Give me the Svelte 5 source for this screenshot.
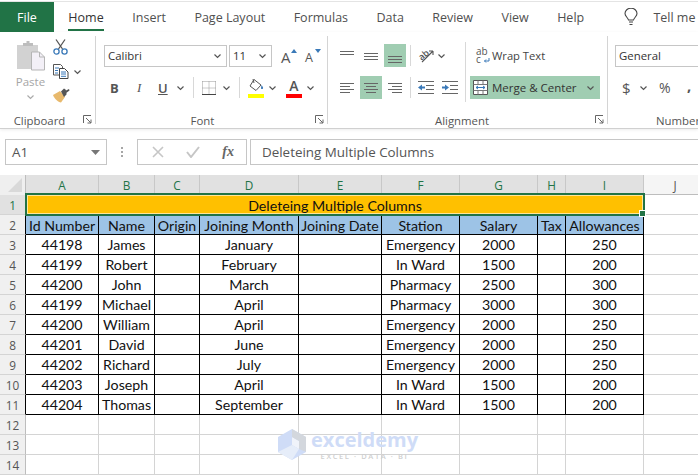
<script lang="ts">
	const tabs = ['Home', 'Insert', 'Page Layout', 'Formulas', 'Data', 'Review', 'View', 'Help'];
	const cols = ['A', 'B', 'C', 'D', 'E', 'F', 'G', 'H', 'I'];
	const heads = ['Id Number', 'Name', 'Origin', 'Joining Month', 'Joining Date', 'Station', 'Salary', 'Tax', 'Allowances'];
	const rows = [
		['44198', 'James', '', 'January', '', 'Emergency', '2000', '', '250'],
		['44199', 'Robert', '', 'February', '', 'In Ward', '1500', '', '200'],
		['44200', 'John', '', 'March', '', 'Pharmacy', '2500', '', '300'],
		['44199', 'Michael', '', 'April', '', 'Pharmacy', '3000', '', '300'],
		['44200', 'William', '', 'April', '', 'Emergency', '2000', '', '250'],
		['44201', 'David', '', 'June', '', 'Emergency', '2000', '', '250'],
		['44202', 'Richard', '', 'July', '', 'Emergency', '2000', '', '250'],
		['44203', 'Joseph', '', 'April', '', 'In Ward', '1500', '', '200'],
		['44204', 'Thomas', '', 'September', '', 'In Ward', '1500', '', '200']
	];
</script>

{#snippet chev(w = 9)}
	<svg class="chev" width={w} height="6" viewBox="0 0 9 6"><path d="M1.5 1.5 4.5 4.5 7.5 1.5" fill="none" stroke="#555" stroke-width="1.2" /></svg>
{/snippet}

{#snippet launcher()}
	<svg class="launcher" width="9" height="9" viewBox="0 0 9 9"><path d="M.5 8V.5H8M3 3l5 5M8 4.5V8H4.5" fill="none" stroke="#666" /></svg>
{/snippet}

{#snippet lines(ys, w = 14)}
	<svg width={w} height="16" viewBox="0 0 {w} 16">
		{#each ys as l}
			<path d="M{l[0]} {l[2]}.5H{l[1]}" stroke="#666" />
		{/each}
	</svg>
{/snippet}

<div class="page">
	<div class="tabs">
		<div class="file">File</div>
		{#each tabs as t, i}
			<div class="tab" class:active={i === 0}>{t}</div>
		{/each}
		<svg class="bulb" width="14" height="18" viewBox="0 0 14 18"><path d="M4.5 12C4 9.500 1 8.500 1 5.500a6 5.300 0 0 1 12 0C13 8.500 10 9.500 9.500 12zM5 14h4M5.500 16.500h3" fill="none" stroke="#444" stroke-width="1.100" /></svg>
		<div class="tab tell">Tell me</div>
	</div>

	<div class="ribbon">
		<section class="group clip">
			<div class="body clip-body">
				<div class="paste">
					<svg width="29" height="31" viewBox="0 0 29 31">
						<path d="M1 5h21v24H1z" fill="#d2d2d2" />
						<path d="M7 6V3h3.500V1h3v2H17v3z" fill="#bdbdbd" />
						<path d="M15.500 12h8l5 5v13h-13z" fill="#f3f0f7" stroke="#b5b5b5" />
						<path d="M23.500 12v5h5" fill="none" stroke="#b5b5b5" />
					</svg>
					<span>Paste</span>
					<svg width="9" height="6" viewBox="0 0 9 6"><path d="M1.500 1.500 4.500 4.500 7.500 1.500" fill="none" stroke="#aaa" stroke-width="1.200" /></svg>
				</div>
				<div class="clip-tools">
					<svg width="15" height="16" viewBox="0 0 15 16">
						<path d="M3 .5 9.500 10M12 .5 5.500 10" fill="none" stroke="#555" stroke-width="1.300" />
						<circle cx="3.500" cy="12.500" r="2.600" fill="none" stroke="#3a79b8" stroke-width="1.300" />
						<circle cx="11.500" cy="12.500" r="2.600" fill="none" stroke="#3a79b8" stroke-width="1.300" />
					</svg>
					<div class="copy">
						<svg width="16" height="15" viewBox="0 0 16 15">
							<path d="M.5.500h7l2 2V11H.5z" fill="#fff" stroke="#555" />
							<path d="M6.500 4.500h5l3.500 3.500v6.500H6.500z" fill="#fff" stroke="#444" />
							<path d="M2 4h4M2 6.500h3M2 9h3M8 8h5M8 10h5M8 12.300h5" stroke="#3a79b8" />
						</svg>
						{@render chev()}
					</div>
					<svg width="17" height="15" viewBox="0 0 17 15">
						<path d="M0 7 7 3l5 6-4 5.500C5 14 1.500 11 0 7z" fill="#e8b96c" />
						<path d="M8 3.500 11 .5l1.500 1 .5 1 3-1.500.5 1.500-3 2.200v1.800l-2.500 2.500z" fill="#555" />
					</svg>
				</div>
			</div>
			<div class="label lab-clip">Clipboard{@render launcher()}</div>
		</section>

		<section class="group font">
			<div class="body">
				<div class="row r1">
					<div class="box fname"><span>Calibri</span>{@render chev()}</div>
					<div class="box fsize"><span>11</span>{@render chev()}</div>
					<div class="grow-a">
						<span class="big-a">A</span><svg class="caret" width="6" height="4" viewBox="0 0 6 4"><path d="M0 4 3 0l3 4z" fill="#3a79b8" /></svg>
					</div>
					<div class="shrink-a">
						<span class="small-a">A</span><svg class="caret" width="6" height="4" viewBox="0 0 6 4"><path d="M0 0 3 4l3-4z" fill="#3a79b8" /></svg>
					</div>
				</div>
				<div class="row r2 font-r2">
					<span class="b">B</span>
					<span class="i">I</span>
					<span class="u">U</span>
					{@render chev()}
					<i class="sep"></i>
					<svg class="borders" width="14" height="14" viewBox="0 0 14 14"><path d="M.5.500h13M.5.500v13M13.500.500v13M7 .5v13M.5 7h13" fill="none" stroke="#999" stroke-dasharray="1 1" /><path d="M0 13.500h14" stroke="#444" /></svg>
					{@render chev()}
					<i class="sep"></i>
					<div class="fill">
						<svg width="16" height="15" viewBox="0 0 16 15">
							<path d="M6 1.500 13 7 8 12.500 2 8z" fill="#fff" stroke="#555" />
							<path d="M5 1 6 5" stroke="#555" />
							<path d="M13.500 7c1 1.500 2 2.500 1.500 3.500-.6 1-2.200.6-2-.6z" fill="#3a79b8" />
						</svg>
						<i class="swatch yellow"></i>
					</div>
					{@render chev()}
					<div class="fontcolor"><span>A</span><i class="swatch red"></i></div>
					{@render chev()}
				</div>
			</div>
			<div class="label lab-font">Font{@render launcher()}</div>
		</section>

		<section class="group align">
			<div class="body align-body">
				<div class="align-left">
					<div class="row r1 al-r1">
						<span class="ic">{@render lines([[0, 14, 3], [0, 14, 6]])}</span>
						<span class="ic">{@render lines([[0, 14, 5], [0, 14, 8], [0, 14, 11]])}</span>
						<span class="ic on">{@render lines([[0, 14, 8], [0, 14, 11], [0, 14, 14]])}</span>
						<i class="sep"></i>
						<svg class="orient" width="17" height="17" viewBox="0 0 17 17">
							<text x="1" y="11" transform="rotate(-40 6 9)" class="ab">ab</text>
							<path d="M4 15 15 4M15 4h-4M15 4v4" fill="none" stroke="#555" stroke-width="1.100" />
						</svg>
						{@render chev()}
					</div>
					<div class="row r2 al-r2">
						<span class="ic">{@render lines([[0, 14, 3], [0, 10, 6], [0, 14, 9], [0, 10, 12]])}</span>
						<span class="ic on">{@render lines([[0, 14, 3], [2, 12, 6], [0, 14, 9], [2, 12, 12]])}</span>
						<span class="ic">{@render lines([[0, 14, 3], [4, 14, 6], [0, 14, 9], [4, 14, 12]])}</span>
						<i class="sep"></i>
						<svg width="16" height="14" viewBox="0 0 16 14"><path d="M0 .5h16M8 4.500h8M8 8.500h8M0 12.500h16" stroke="#666" /><path d="M0 6.500 4 3.500v2h3v2H4v2z" fill="#3a79b8" /></svg>
						<svg width="16" height="14" viewBox="0 0 16 14"><path d="M0 .5h16M8 4.500h8M8 8.500h8M0 12.500h16" stroke="#666" /><path d="M7 6.500 3 3.500v2H0v2h3v2z" fill="#3a79b8" /></svg>
					</div>
				</div>
				<i class="vsep"></i>
				<div class="wrapmerge">
					<div class="wrap">
						<svg class="abc" width="17" height="17" viewBox="0 0 17 17">
							<text x="1" y="8">ab</text>
							<text x="1" y="16">c</text>
							<path d="M14 11v3H9.500M11 12.500 9.500 14l1.500 1.500" fill="none" stroke="#3a79b8" />
						</svg>
						<span>Wrap Text</span>
					</div>
					<div class="merge">
						<svg width="15" height="15" viewBox="0 0 15 15">
							<path d="M.5.500h14v14H.5z" fill="#fff" stroke="#555" />
							<path d="M.5 4.500h14M.5 10.500h14M5 .5v4M10 .5v4M5 10.500v4M10 10.500v4" stroke="#777" fill="none" />
							<path d="M3 7.500h9M3 7.500l2-1.500M3 7.500 5 9M12 7.500 10 6M12 7.500 10 9" stroke="#3a79b8" fill="none" />
						</svg>
						<span>Merge &amp; Center</span>
						{@render chev()}
					</div>
				</div>
			</div>
			<div class="label lab-align">Alignment{@render launcher()}</div>
		</section>

		<section class="group number">
			<div class="body">
				<div class="row r1"><div class="box general"><span>General</span></div></div>
				<div class="row r2 num-r2">
					<span class="sym dollar">$</span>
					{@render chev()}
					<span class="sym pct">%</span>
					<span class="sym comma">,</span>
				</div>
			</div>
			<div class="label">Number</div>
		</section>
	</div>

	<div class="formula">
		<div class="namebox"><span>A1</span><svg width="9" height="5" viewBox="0 0 9 5"><path d="M0 0h9L4.500 5z" fill="#777" /></svg></div>
		<div class="dots"><i></i><i></i><i></i></div>
		<div class="fbtns">
			<svg width="12" height="12" viewBox="0 0 12 12"><path d="M1 1l10 10M11 1 1 11" stroke="#c6c6c6" stroke-width="1.600" /></svg>
			<svg width="14" height="12" viewBox="0 0 14 12"><path d="M1 6l4 5 8-10" fill="none" stroke="#c6c6c6" stroke-width="2" /></svg>
			<span class="fx">fx</span>
		</div>
		<div class="fvalue">Deleteing Multiple Columns</div>
	</div>

	<div class="sheet">
		<div class="corner"><svg width="14" height="14" viewBox="0 0 14 14"><path d="M14 0v14H0z" fill="#d9d9d9" /></svg></div>
		{#each cols as c}
			<div class="ch sel">{c}</div>
		{/each}
		<div class="ch">J</div>

		<div class="rh sel">1</div>
		<div class="title">Deleteing Multiple Columns</div>
		<div class="blank"></div>

		<div class="rh edge">2</div>
		{#each heads as h}
			<div class="tc head">{h}</div>
		{/each}
		<div class="blank"></div>

		{#each rows as r, i}
			<div class="rh edge">{i + 3}</div>
			{#each r as v}
				<div class="tc">{v}</div>
			{/each}
			<div class="blank"></div>
		{/each}

		{#each [12, 13, 14] as n}
			<div class="rh">{n}</div>
			{#each cols as c}
				<div class="blank"></div>
			{/each}
			<div class="blank"></div>
		{/each}

		<div class="selection"><i></i></div>
		<div class="mark">
			<svg width="28" height="31" viewBox="0 0 28 31">
				<path d="M14 0 28 8v15L14 31 0 23V8z" fill="#cfdcf7" />
				<path d="M14 8 21 12v8l-7-4z" fill="#f0f3fa" />
				<path d="M14 0 28 8v15l-7-3v-8L14 8z" fill="#d3d7dd" />
				<path d="M0 23 14 16l7 4-7 11z" fill="#e6edf9" />
			</svg>
			<div class="mark-text">
				<span class="mark-name">exceldemy</span>
				<span class="mark-sub">EXCEL · DATA · BI</span>
			</div>
		</div>
	</div>
</div>

<style>
	:global(body) {
		margin: 0;
		background: #fff;
	}
	.page {
		width: 698px;
		height: 476px;
		overflow: hidden;
		font-family: 'Open Sans', sans-serif;
		color: #444;
		position: relative;
		box-shadow: inset 0 1px 0 #fff, inset 0 2px 0 #e4e4e4;
	}
	.tabs {
		display: flex;
		height: 30px;
		padding-top: 2px;
		align-items: stretch;
	}
	.file {
		width: 54px;
		flex: none;
		background: #217346;
		color: #fff;
		font-size: 12.5px;
		display: flex;
		align-items: center;
		justify-content: center;
	}
	.tab {
		flex: none;
		font-size: 12.5px;
		color: #505050;
		display: flex;
		align-items: center;
		margin-left: 14.200px;
		margin-right: 14.200px;
		white-space: nowrap;
		position: relative;
	}
	.tab.active {
		color: #333;
		font-weight: 500;
		letter-spacing: 0.1px;
	}
	.tab.active::after {
		content: '';
		position: absolute;
		left: 0;
		right: 0;
		bottom: 1px;
		height: 2px;
		background: #217346;
	}
	.bulb {
		flex: none;
		align-self: center;
		margin-left: 26px;
	}
	.tell {
		margin-left: 15px;
		margin-right: 0;
	}
	.ribbon {
		display: flex;
		height: 96px;
		border-bottom: 1px solid #d0d0d0;
		box-shadow: 0 1px 3px rgba(0, 0, 0, 0.08);
		overflow: hidden;
	}
	.group {
		display: flex;
		flex-direction: column;
		flex: none;
		position: relative;
		padding-top: 4px;
		box-sizing: border-box;
	}
	.group + .group::before {
		content: '';
		position: absolute;
		left: 0;
		top: 4px;
		bottom: 4px;
		width: 1px;
		background: #d4d4d4;
	}
	.body {
		flex: 1;
	}
	.label {
		height: 22px;
		padding-top: 6px;
		box-sizing: border-box;
		font-size: 11.4px;
		color: #555;
		display: flex;
		align-items: center;
		justify-content: center;
		position: relative;
	}
	.lab-clip {
		padding-right: 16px;
	}
	.lab-font {
		padding-right: 26px;
	}
	.lab-align {
		padding-right: 10px;
	}
	.launcher {
		position: absolute;
		right: 3px;
		bottom: 4px;
	}
	.clip {
		width: 95px;
	}
	.clip-body {
		display: flex;
		padding-left: 15px;
		gap: 7px;
	}
	.paste {
		width: 31px;
		display: flex;
		flex-direction: column;
		align-items: center;
		padding-top: 4px;
		font-size: 11.5px;
		color: #a6a6a6;
	}
	.paste span {
		margin-top: 2px;
		line-height: 18px;
	}
	.paste svg:last-child {
		margin-top: 3px;
	}
	.clip-tools {
		display: flex;
		flex-direction: column;
		gap: 9px;
		padding-top: 3px;
		align-items: flex-start;
	}
	.copy {
		display: flex;
		align-items: center;
		gap: 4px;
	}
	.font {
		width: 232px;
		padding-left: 9px;
	}
	.row {
		display: flex;
		align-items: center;
	}
	.r1 {
		height: 23px;
		margin-top: 8px;
	}
	.r2 {
		height: 23px;
		margin-top: 9px;
	}
	.box {
		height: 22px;
		box-sizing: border-box;
		border: 1px solid #c6c6c6;
		display: flex;
		align-items: center;
		justify-content: space-between;
		padding: 0 4px 0 3px;
		font-size: 11.4px;
		color: #333;
	}
	.fname {
		width: 123px;
	}
	.fsize {
		width: 43px;
		margin-left: 2px;
	}
	.grow-a,
	.shrink-a {
		display: flex;
		align-items: flex-start;
		margin-left: 9px;
		width: 15px;
		color: #555;
		height: 20px;
		position: relative;
	}
	.big-a {
		font-size: 15px;
		line-height: 20px;
		margin-top: 1px;
	}
	.small-a {
		font-size: 12.5px;
		line-height: 20px;
		margin-top: 2px;
	}
	.caret {
		position: absolute;
		left: 10px;
		top: 3px;
	}
	.font-r2 {
		padding-left: 6px;
	}
	.font-r2 span {
		font-size: 13px;
		color: #555;
	}
	.b {
		font-weight: 700;
		width: 24px;
	}
	.i {
		font-style: italic;
		font-family: 'Liberation Serif', serif;
		width: 24px;
		padding-left: 3px;
		box-sizing: border-box;
	}
	.u {
		text-decoration: underline;
		font-weight: 600;
		width: 14px;
	}
	.font-r2 .chev {
		margin-left: 4px;
	}
	.font-r2 .borders + .chev {
		margin-left: 6px;
	}
	.sep {
		width: 1px;
		height: 21px;
		background: #d8d8d8;
		margin: 0 8px;
		flex: none;
	}
	.fill {
		width: 16px;
		height: 21px;
		display: flex;
		flex-direction: column;
		justify-content: flex-end;
	}
	.fill svg {
		margin-bottom: 1px;
	}
	.swatch {
		display: block;
		height: 4px;
		width: 16px;
	}
	.yellow {
		background: #ffff00;
	}
	.red {
		background: #ff0000;
	}
	.fontcolor {
		width: 16px;
		margin-left: 9px;
		height: 21px;
		display: flex;
		flex-direction: column;
		align-items: center;
		justify-content: flex-end;
	}
	.font-r2 .fontcolor span {
		font-size: 14px;
		line-height: 16px;
		font-weight: 600;
	}
	.align {
		width: 280px;
	}
	.align-body {
		display: flex;
		padding-left: 9px;
	}
	.align-left {
		width: 129px;
	}
	.ic {
		width: 22px;
		height: 23px;
		display: flex;
		align-items: center;
		justify-content: center;
		flex: none;
	}
	.ic.on {
		background: #a0cdb2;
	}
	.al-r1,
	.al-r2 {
		gap: 2px;
	}
	.al-r1 .sep,
	.al-r2 .sep {
		margin: 0 5px 0 2px;
	}
	.al-r2 svg + svg {
		margin-left: 6px;
	}
	.orient {
		overflow: visible;
	}
	.orient text.ab {
		font-size: 9px;
		fill: #555;
		font-weight: 600;
	}
	.vsep {
		width: 1px;
		height: 60px;
		margin-top: 6px;
		background: #d8d8d8;
		flex: none;
	}
	.wrapmerge {
		margin-left: 4px;
		font-size: 11.5px;
		color: #444;
	}
	.wrap {
		height: 23px;
		margin-top: 8px;
		margin-bottom: 9px;
		display: flex;
		align-items: center;
		padding-left: 5px;
		font-size: 11.2px;
	}
	.abc {
		flex: none;
	}
	.abc text {
		font-size: 10px;
		fill: #555;
	}
	.merge {
		width: 130px;
		height: 23px;
		background: #a0cdb2;
		display: flex;
		align-items: center;
		padding-left: 3px;
		box-sizing: border-box;
		color: #333;
	}
	.merge span {
		margin-left: 4px;
		flex: 1;
		white-space: nowrap;
	}
	.merge .chev {
		margin-right: 5px;
	}
	.number {
		flex: 1;
		padding-left: 8px;
		width: 200px;
	}
	.general {
		width: 200px;
	}
	.num-r2 {
		padding-left: 7px;
	}
	.sym {
		font-size: 15px;
		color: #555;
	}
	.dollar {
		width: 17px;
	}
	.pct {
		margin-left: 11px;
		width: 23px;
		font-size: 14px;
	}
	.comma {
		font-weight: 700;
		margin-left: 5px;
		margin-top: -6px;
	}
	.number .label {
		justify-content: flex-start;
		padding-left: 41px;
		white-space: nowrap;
	}
	.formula {
		display: flex;
		align-items: stretch;
		height: 26px;
		margin-top: 10px;
		padding-left: 5px;
		font-size: 13.4px;
		color: #555;
	}
	.namebox {
		width: 102px;
		box-sizing: border-box;
		border: 1px solid #c6c6c6;
		display: flex;
		align-items: center;
		justify-content: space-between;
		padding: 0 6px;
	}
	.dots {
		width: 30px;
		display: flex;
		flex-direction: column;
		align-items: center;
		justify-content: center;
		gap: 2px;
	}
	.dots i {
		width: 2px;
		height: 2px;
		background: #a6a6a6;
	}
	.fbtns {
		width: 110px;
		box-sizing: border-box;
		border: 1px solid #c6c6c6;
		display: flex;
		align-items: center;
		justify-content: space-between;
		padding: 0 12px 0 14px;
	}
	.fx {
		font-family: 'Liberation Serif', serif;
		font-style: italic;
		font-weight: 700;
		font-size: 14px;
		color: #666;
	}
	.fvalue {
		flex: 1;
		margin-left: 3px;
		border: 1px solid #c6c6c6;
		border-right: 0;
		display: flex;
		align-items: center;
		padding-left: 11px;
	}
	.sheet {
		display: grid;
		grid-template-columns: 26px 73px 56px 45px 99px 83px 78px 78px 28px 78px 63px;
		grid-auto-rows: 20px;
		margin-top: 10px;
		position: relative;
		font-family: Lato, sans-serif;
		font-size: 14.2px;
		color: #111;
	}
	.sheet > div {
		box-sizing: border-box;
	}
	.corner {
		background: #efefef;
		border-right: 1px solid #bdbdbd;
		display: flex;
		align-items: flex-end;
		justify-content: flex-end;
		padding: 0 3px 3px 0;
	}
	.ch,
	.rh {
		display: flex;
		align-items: center;
		justify-content: center;
		font-family: 'Open Sans', sans-serif;
		font-size: 11.8px;
		color: #555;
	}
	.ch {
		background: #f5f5f5;
		border-right: 1px solid #c8c8c8;
		border-bottom: 1px solid #bdbdbd;
	}
	.rh {
		background: #f0f0f0;
		border-right: 1px solid #bdbdbd;
		border-bottom: 1px solid #d4d4d4;
	}
	.rh.edge {
		border-right-color: #000;
	}
	.ch.sel,
	.rh.sel {
		background: #e1e1e1;
		color: #217346;
	}
	.title {
		grid-column: span 9;
		background: #ffc000;
		display: flex;
		align-items: center;
		justify-content: center;
	}
	.blank {
		border-right: 1px solid #d4d4d4;
		border-bottom: 1px solid #d4d4d4;
	}
	.tc {
		display: flex;
		align-items: center;
		justify-content: center;
		white-space: nowrap;
		border-right: 1px solid #000;
		border-bottom: 1px solid #000;
	}
	.head {
		background: #9dc3e6;
		border-top: 1px solid #000;
	}
	.selection {
		position: absolute;
		left: 25px;
		top: 18px;
		width: 620px;
		height: 23px;
		box-sizing: border-box;
		border: 2px solid #217346;
		box-shadow: inset 0 0 0 1px rgba(255, 255, 255, 0.6);
		pointer-events: none;
	}
	.selection i {
		position: absolute;
		right: -3px;
		bottom: -3px;
		width: 5px;
		height: 5px;
		background: #217346;
		border: 1px solid #fff;
	}
	.mark {
		position: absolute;
		left: 278px;
		top: 254px;
		display: flex;
		gap: 5px;
		align-items: flex-start;
		pointer-events: none;
	}
	.mark-text {
		display: flex;
		flex-direction: column;
		align-items: center;
	}
	.mark-name {
		font-family: 'Open Sans', sans-serif;
		font-weight: 700;
		font-size: 20px;
		line-height: 22px;
		color: #cfdcf7;
	}
	.mark-sub {
		font-family: 'Open Sans', sans-serif;
		font-size: 7.5px;
		letter-spacing: 1.600px;
		font-weight: 600;
		color: #cfcfcf;
		line-height: 10px;
	}
</style>
